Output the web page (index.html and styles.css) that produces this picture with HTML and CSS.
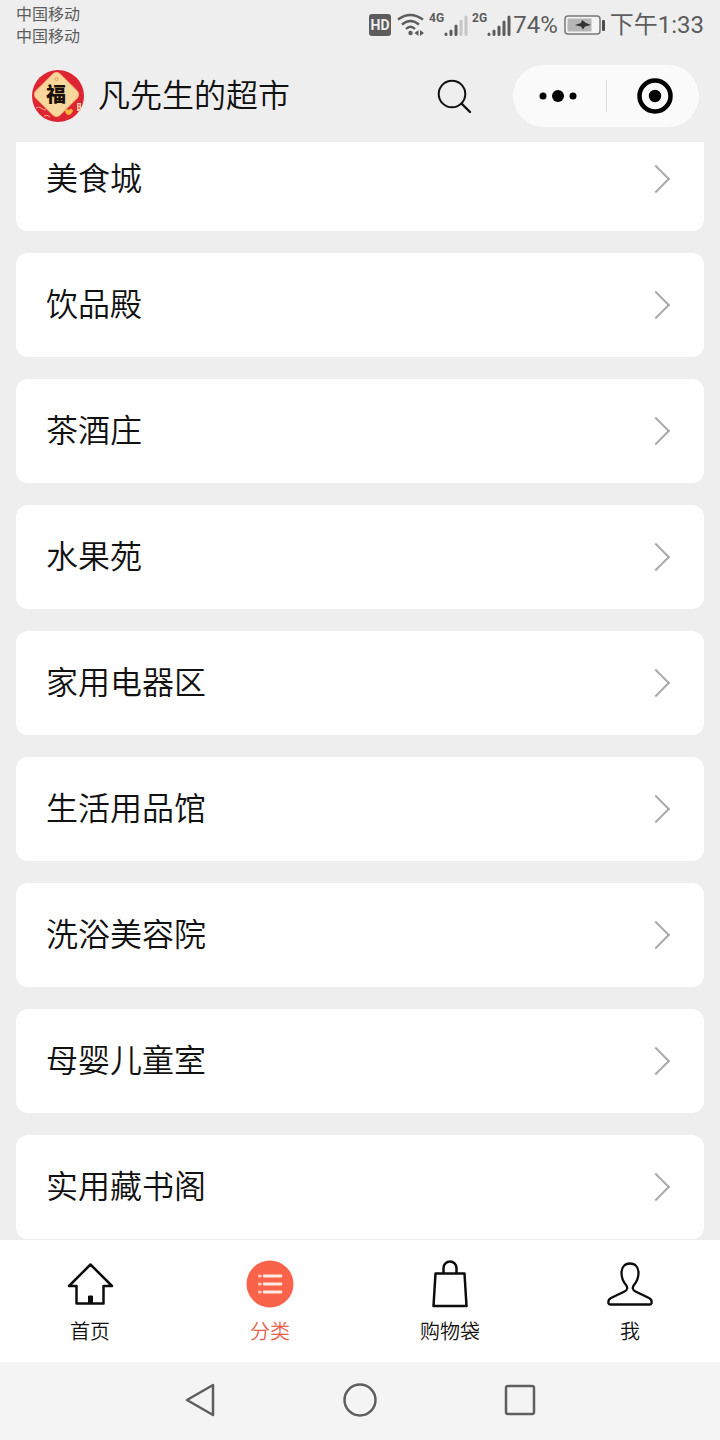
FILE: index.html
```html
<!DOCTYPE html>
<html lang="zh-CN">
<head>
  <meta charset="UTF-8" />
  <meta name="viewport" content="width=device-width, initial-scale=1.0"/>
  <title>凡先生的超市</title>
  <link rel="stylesheet" href="styles.css">
</head>
<body>
  <div class="app">
    <div class="status-bar">
      <div class="carriers">
        <span>中国移动</span>
        <span>中国移动</span>
      </div>
      <div class="indicators">
        <span class="hd">HD</span>
        <svg class="wifi" width="28" height="24" viewBox="0 0 28 24" fill="none" stroke="#5c5c5c" stroke-width="2.400">
          <path d="M1 6.500Q13 -2.500 26 6.500M5 11.500Q13.500 4.500 22 11.500M9 16Q13.500 11.500 18 16"/>
          <circle cx="13.500" cy="20" r="2.200" fill="#5c5c5c" stroke="none"/>
          <path d="M21.500 17v6l-4-3zM23 17v6l4-3z" fill="#5c5c5c" stroke="none"/>
        </svg>
        <span class="net">4G</span>
        <svg class="signal" width="24" height="24" viewBox="0 0 24 24" stroke="#5c5c5c" stroke-width="3" stroke-linecap="round">
          <path d="M2 21v0.500M7 18v3.500M12 13v8.500"/>
          <path d="M17 8v13.500M22 4v17.500" stroke="#c6c6c6"/>
        </svg>
        <span class="net">2G</span>
        <svg class="signal" width="24" height="24" viewBox="0 0 24 24" stroke="#5c5c5c" stroke-width="3" stroke-linecap="round">
          <path d="M2 21v0.500M7 18v3.500M12 14v7.500M17 9v12.500M22 4v17.500"/>
        </svg>
        <span class="percent">74%</span>
        <svg class="battery" width="42" height="20" viewBox="0 0 42 20">
          <rect x="1" y="1" width="35" height="18" rx="3" fill="#f4f4f4" stroke="#777" stroke-width="1.500"/>
          <rect x="3.500" y="3.500" width="24" height="13" fill="#b5b5b5"/>
          <path d="M11 10l6-2 1-3 4 3 5 2-6 1.500-2 3-2-3z" fill="#333"/>
          <rect x="38" y="5" width="3" height="11" rx="1" fill="#4c4c4c"/>
        </svg>
        <span class="time">下午1:33</span>
      </div>
    </div>

    <header class="header">
      <svg class="logo" width="52" height="52" viewBox="0 0 52 52" aria-hidden="true">
        <circle cx="26" cy="26" r="26" fill="#dd2433"/>
        <path d="M4 38q3-2 5 0t5 2M12 46q3-2 6 1" fill="none" stroke="#f7b08a"/>
        <rect x="7.500" y="7.500" width="34" height="34" rx="5" transform="rotate(45 24.500 24.500)" fill="#f8d79c" stroke="#f3bd7b"/>
        <circle cx="24.500" cy="9" r="1.500" fill="none" stroke="#d9a35c"/>
        <path d="M45 33h4v8h-4z" fill="#f6c9a0"/>
        <path d="M46 35h2M46 38h2" stroke="#dd2433"/>
        <path d="M33 41q1-3 4-1 3-3 4 1-2 4-4 4-3 0-4-4z" fill="#f7b43c"/>
        <text class="logo-text" x="24" y="32" text-anchor="middle">福</text>
      </svg>
      <h1>凡先生的超市</h1>
      <button class="search-btn" aria-label="搜索">
        <svg width="36" height="36" viewBox="0 0 36 36" fill="none" stroke="#111" stroke-width="2">
          <circle cx="16" cy="16" r="13.300"/>
          <path d="M25.500 25.500l8.500 8.500" stroke-linecap="round" stroke-width="2.400"/>
        </svg>
      </button>
      <div class="capsule">
        <button class="more-btn" aria-label="更多">
          <svg width="40" height="12" viewBox="0 0 40 12">
            <circle cx="5" cy="6" r="3.500"/>
            <circle cx="20" cy="6" r="6"/>
            <circle cx="35" cy="6" r="3.500"/>
          </svg>
        </button>
        <button class="close-btn" aria-label="关闭">
          <svg width="36" height="36" viewBox="0 0 36 36">
            <circle cx="18" cy="18" r="15.500" fill="none" stroke="#000" stroke-width="4.500"/>
            <circle cx="18" cy="18" r="6.200"/>
          </svg>
        </button>
      </div>
    </header>

    <!-- opens scrolled to the last category -->
    <main class="content">
      <ul class="category-list">
        <li><a class="category" href="#food">美食城</a></li>
        <li><a class="category" href="#drinks">饮品殿</a></li>
        <li><a class="category" href="#tea">茶酒庄</a></li>
        <li><a class="category" href="#fruit">水果苑</a></li>
        <li><a class="category" href="#appliances">家用电器区</a></li>
        <li><a class="category" href="#daily">生活用品馆</a></li>
        <li><a class="category" href="#bath">洗浴美容院</a></li>
        <li><a class="category" href="#baby">母婴儿童室</a></li>
        <li><a class="category" href="#books">实用藏书阁</a></li>
      </ul>
    </main>

    <nav class="tab-bar">
      <a class="tab" href="#home">
        <svg width="48" height="48" viewBox="0 0 48 48" fill="none" stroke="#0c0c0c" stroke-width="2.500" stroke-linejoin="round">
          <path d="M24.500 4.500L3 26h7.500v17.500h27V26h8.500z"/>
          <path d="M22.500 36h4v7h-4z" fill="#0c0c0c" stroke-width="1"/>
        </svg>
        <span>首页</span>
      </a>
      <a class="tab active" href="#category">
        <svg width="48" height="48" viewBox="0 0 48 48">
          <circle cx="24" cy="24" r="23.500" fill="#f8634a"/>
          <path d="M18 16h17M18 24h17M18 32h17" stroke="#ffe9e2" stroke-width="2.800" stroke-linecap="round"/>
          <path d="M13.500 16h0.500M13.500 24h0.500M13.500 32h0.500" stroke="#ffd2c6" stroke-width="3" stroke-linecap="round"/>
        </svg>
        <span>分类</span>
      </a>
      <a class="tab" href="#bag">
        <svg width="48" height="48" viewBox="0 0 48 48" fill="none" stroke="#0c0c0c" stroke-width="2.500" stroke-linejoin="round">
          <path d="M9.500 13.500h29l2 32.500h-33z"/>
          <path d="M17.500 13.500V8a6.500 6.500 0 0 1 13 0v5.500"/>
        </svg>
        <span>购物袋</span>
      </a>
      <a class="tab" href="#me">
        <svg width="48" height="48" viewBox="0 0 48 48" fill="none" stroke="#0c0c0c" stroke-width="2.300" stroke-linejoin="round">
          <path d="M24 3.500c-5.500 0-8.500 4-8.500 9.500 0 6 2 9 4.500 12 2 2.500 1.500 5-1.500 6.500L5 38c-2 1-3 3-2.500 5.500q0.300 1 1.500 1h40q1.200 0 1.500-1c0.500-2.500-0.500-4.500-2.500-5.500l-13.500-6.500c-3-1.500-3.500-4-1.500-6.500 2.500-3 4.500-6 4.500-12 0-5.500-3-9.500-8.500-9.500z"/>
        </svg>
        <span>我</span>
      </a>
    </nav>

    <div class="system-nav">
      <button aria-label="返回">
        <svg width="36" height="36" viewBox="0 0 36 36" fill="none" stroke="#5e5e5e" stroke-width="2.500" stroke-linejoin="round">
          <path d="M31 3v30L5 18z"/>
        </svg>
      </button>
      <button aria-label="主屏幕">
        <svg width="36" height="36" viewBox="0 0 36 36" fill="none" stroke="#5e5e5e" stroke-width="2.500">
          <circle cx="18" cy="18" r="15.500"/>
        </svg>
      </button>
      <button aria-label="最近任务">
        <svg width="36" height="36" viewBox="0 0 36 36" fill="none" stroke="#5e5e5e" stroke-width="2.500">
          <rect x="4" y="4" width="28" height="28" rx="2"/>
        </svg>
      </button>
    </div>
  </div>
</body>
</html>
```
FILE: styles.css
```css
* {
  box-sizing: border-box;
}

body {
  margin: 0;
  font-family: Roboto, "Noto Sans CJK SC", sans-serif;
  font-weight: 350;
  background: #eee;
  color: #111;
}

button {
  display: flex;
  align-items: center;
  justify-content: center;
  padding: 0;
  border: none;
  background: none;
  cursor: pointer;
}

a {
  color: inherit;
  text-decoration: none;
}

svg {
  display: block;
  flex-shrink: 0;
}

.app {
  display: flex;
  flex-direction: column;
  height: 100vh;
}

/* Phone status bar */
.status-bar {
  display: flex;
  justify-content: space-between;
  height: 50px;
  padding: 0 16px;
  color: #5c5c5c;
  font-weight: 400;
}

.carriers {
  display: flex;
  flex-direction: column;
  padding-top: 4px;
  font-size: 16px;
  line-height: 22px;
}

.indicators {
  display: flex;
  align-items: center;
  font-size: 24px;
  line-height: 50px;
}

.hd {
  width: 22px;
  margin-right: 6px;
  border-radius: 3px;
  background: #5c5c5c;
  color: #eee;
  font-size: 14px;
  font-weight: 700;
  line-height: 22px;
  text-align: center;
}

.net {
  align-self: flex-start;
  margin-left: 4px;
  padding-top: 11px;
  font-size: 12px;
  font-weight: 700;
  line-height: 14px;
}

.percent {
  margin-left: 2px;
}

.battery {
  margin: 0 4px 0 6px;
}

/* Mini program header */
.header {
  display: flex;
  align-items: center;
  height: 92px;
  padding: 0 21px 0 32px;
}

.logo-text {
  font-family: "Noto Sans CJK SC", sans-serif;
  font-size: 20px;
  font-weight: 900;
  fill: #1c0e08;
}

h1 {
  flex: 1;
  margin: 0 0 0 14px;
  font-size: 32px;
  font-weight: 350;
  line-height: 44px;
}

.search-btn {
  margin-right: 41px;
}

.capsule {
  display: flex;
  width: 186px;
  height: 62px;
  border-radius: 31px;
  background: #fafafa;
}

.capsule button {
  flex: 1;
  height: 100%;
}

.more-btn {
  padding-right: 4px;
}

.close-btn {
  position: relative;
  padding-left: 4px;
}

.close-btn::before {
  content: "";
  position: absolute;
  left: 0;
  top: 15px;
  bottom: 15px;
  width: 1px;
  background: #ddd;
}

/* Category list */
.content {
  display: flex;
  flex: 1;
  flex-direction: column-reverse;
  min-height: 0;
  overflow-y: auto;
  scrollbar-width: none;
}

.category-list {
  display: flex;
  flex-direction: column;
  gap: 22px;
  margin: 0;
  padding: 0 16px;
  list-style: none;
}

.category {
  display: flex;
  align-items: center;
  justify-content: space-between;
  height: 104px;
  padding: 0 38px 0 30px;
  border-radius: 12px;
  background: #fff;
  font-size: 32px;
  line-height: 44px;
}

.category::after {
  content: "";
  width: 18px;
  height: 18px;
  border: solid #aaa;
  border-width: 2px 2px 0 0;
  transform: rotate(45deg);
}

/* Bottom tabs */
.tab-bar {
  display: flex;
  height: 123px;
  border-top: 1px solid #eee;
  background: #fff;
}

.tab {
  display: flex;
  flex: 1;
  flex-direction: column;
  align-items: center;
  gap: 10px;
  padding-top: 20px;
  font-size: 20px;
  line-height: 28px;
}

.tab.active {
  color: #e8604a;
}

.system-nav {
  display: flex;
  align-items: center;
  justify-content: center;
  gap: 124px;
  height: 78px;
  padding-bottom: 2px;
  background: #f4f4f4;
}
```
